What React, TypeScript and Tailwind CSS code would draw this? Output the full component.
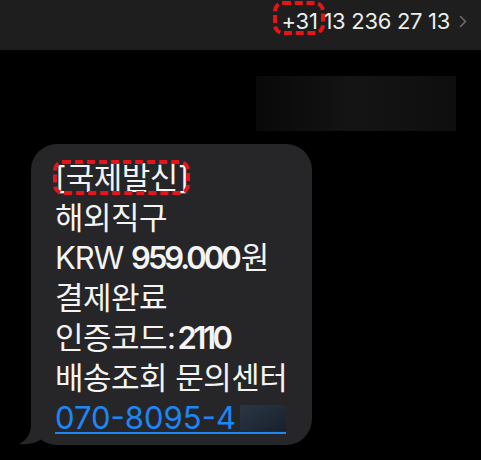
import React from "react";

const FONT = { fontFamily: 'Inter, "Noto Sans CJK KR", sans-serif' };

const Chevron = () => (
  <svg width="8" height="13" viewBox="0 0 8 13" className="ml-[9px] mt-[1px]">
    <path d="M1.5 1.5 L6.5 6.5 L1.5 11.5" fill="none" stroke="#6b6b6b" strokeWidth="1.6" strokeLinecap="round" strokeLinejoin="round" />
  </svg>
);

// red dashed annotation drawn over a piece of text
const Marked = ({ children, className }: { children: React.ReactNode; className: string }) => (
  <span className="relative">
    {children}
    <span className={`absolute border-[4px] border-dashed border-[#e8141b] rounded-[10px] ${className}`} />
  </span>
);

const Header = () => (
  <div className="h-[50px] bg-[#1e1e1e] flex items-center justify-end pr-[14px] pb-[8px]">
    <div className="text-[22px] text-[#ececec] tracking-[-0.3px] flex items-center leading-none">
      <Marked className="-left-[9px] -right-[7px] -top-[9px] -bottom-[3px]">+31</Marked>
      <span>&nbsp;13 236 27 13</span>
    </div>
    <Chevron />
  </div>
);

const Tail = () => (
  <svg className="absolute left-[-12px] bottom-0" width="40" height="34" viewBox="0 0 40 34">
    <path d="M12 0 L12 14 C12 22 8 29 0 33 C10 34 18 32 24 27 L40 27 L40 0 Z" fill="#262628" />
  </svg>
);

const Bubble = () => (
  <div className="relative ml-[31px] w-[281px] bg-[#262628] rounded-[26px] pl-[24px] pt-[14px] pb-[7px] text-[31px] leading-[40px] tracking-[-0.5px] text-[#f4f4f4]">
    <Tail />
    <div className="relative">
      <Marked className="-left-[2px] -right-[1px] top-[1px] bottom-[1px]">[국제발신]</Marked>
    </div>
    <div className="relative">해외직구</div>
    <div className="relative">
      <span className="tracking-[-1px]">KRW </span>
      <span className="font-semibold tracking-[-3px]">959.000</span>
      <span className="ml-[2px]">원</span>
    </div>
    <div className="relative">결제완료</div>
    <div className="relative">
      인증코드:<span className="font-semibold tracking-[-3.5px] ml-[2px]">2110</span>
    </div>
    <div className="relative whitespace-nowrap">배송조회 문의센터</div>
    <div className="relative text-[#1f86f5]">
      <span className="inline-flex items-end border-b-2 border-[#1f86f5] leading-[26px] pb-[1px] tracking-[0px]">
        070-8095-4
        <span className="inline-block ml-[4px] w-[46px] h-[26px] bg-gradient-to-br from-[#2c3646] to-[#18202c]" />
      </span>
    </div>
  </div>
);

export default function App() {
  return (
    <div className="w-[481px] h-[460px] bg-black overflow-hidden" style={FONT}>
      <Header />
      <div className="flex justify-end pr-[25px] mt-[26px]">
        <div className="w-[200px] h-[55px] bg-gradient-to-r from-[#0a0909] via-[#141414] to-[#0e0e0e]" />
      </div>
      <div className="mt-[13px]">
        <Bubble />
      </div>
    </div>
  );
}
